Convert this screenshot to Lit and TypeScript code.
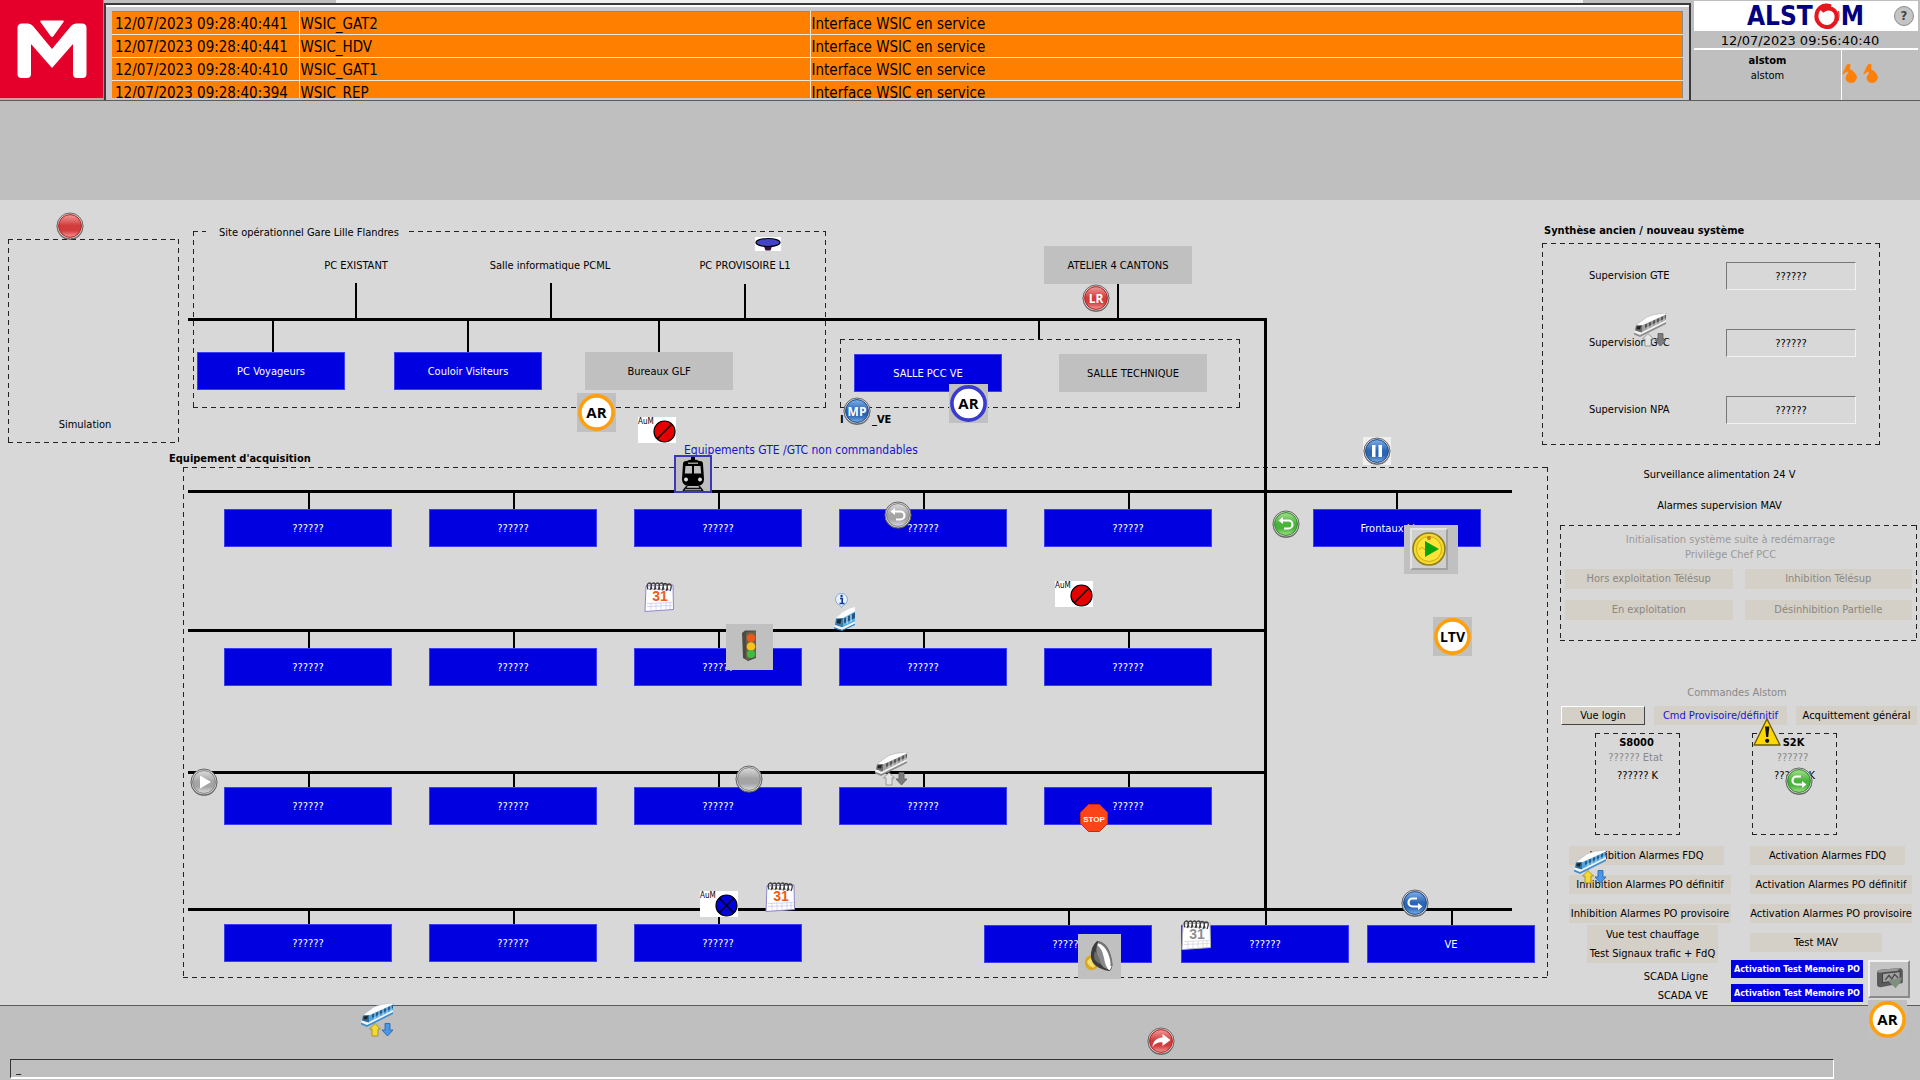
import { LitElement, html, svg, css, TemplateResult } from "lit";
import { customElement } from "lit/decorators.js";
import { styleMap } from "lit/directives/style-map.js";

type Drawing = TemplateResult;

interface Box { x: number; y: number; w: number; h: number; }
interface NodeItem extends Box { text: string; tone: "blue" | "grey"; }
interface Label { x: number; y: number; text: string; kind?: string; }
interface Pin { x: number; y: number; w: number; h: number; name: string; art: Drawing; }

const place = (b: Box) => styleMap({ left: `${b.x}px`, top: `${b.y}px`, width: `${b.w}px`, height: `${b.h}px` });

/* ---------- round glossy buttons ---------- */

const TONES: Record<string, [string, string, string]> = {
  red: ["#f29a9a", "#d23c3c", "#b81f1f"],
  blue: ["#7fb0e8", "#2a66b4", "#1a4788"],
  green: ["#a4e08c", "#48b53a", "#2d8a26"],
  grey: ["#dcdcdc", "#a4a4a4", "#808080"],
};

const ball = (tone: string, glyph: unknown = null): Drawing => {
  const [hi, mid, low] = TONES[tone];
  return html`<svg viewBox="0 0 28 28">
    <defs>
      <linearGradient id="ball-${tone}" x1="0" y1="0" x2="0" y2="1">
        <stop offset="0" stop-color=${hi}></stop>
        <stop offset=".48" stop-color=${mid}></stop>
        <stop offset=".7" stop-color=${mid}></stop>
        <stop offset="1" stop-color=${hi}></stop>
      </linearGradient>
    </defs>
    <circle cx="14" cy="14.600" r="13.200" fill="#3c3c3c" opacity=".8"></circle>
    <circle cx="14" cy="14" r="13" fill="#dedede" stroke="#666" stroke-width="1"></circle>
    <circle cx="14" cy="14" r="11.400" fill="url(#ball-${tone})" stroke=${low} stroke-width="1"></circle>
    ${glyph}
  </svg>`;
};

const back = svg`<path d="M9 10.500H16.500a4 4 0 0 1 0 8H12" fill="none" stroke="#fff" stroke-width="2.200"></path><path d="M6.500 10.500L11 7v7z" fill="#fff"></path>`;
const forward = svg`<g transform="rotate(180 14 14)">${back}</g>`;
const share = svg`<path d="M5.500 20C6 14 10 10.500 15.500 10.500V7L23.500 13L15.500 19V15.400C11 15 8 16.500 5.500 20z" fill="#fff"></path>`;
const play = svg`<path d="M10 7.500L21 14L10 20.500z" fill="#fff"></path>`;
const pause = svg`<path d="M9 8h3.500v12H9zM15.500 8H19v12h-3.500z" fill="#fff"></path>`;
const letters = (t: string) => svg`<text x="14" y="18.500" class="ball-text">${t}</text>`;

/* ---------- ringed letter signs ---------- */

const ringSign = (t: string, color: string, size = 15): Drawing => html`<svg viewBox="0 0 39 39">
  <circle cx="19.500" cy="19.500" r="16.600" fill="#fff" stroke=${color} stroke-width="3.600"></circle>
  <text x="19.500" y="25" class="sign-text" font-size=${size}>${t}</text>
</svg>`;

/* ---------- AuM tag ---------- */

const aum = (crossed: boolean): Drawing => html`<svg viewBox="0 0 38 26">
  <rect width="38" height="26" fill="#fff"></rect>
  <text x="0" y="7" class="aum-text">AuM</text>
  <circle cx="26.500" cy="14.500" r="10.500" fill=${crossed ? "#0000e0" : "#e60000"} stroke="#000" stroke-width="1.200"></circle>
  <path d=${crossed ? "M19.500 21.500L33.500 7.500M19.500 7.500L33.500 21.500" : "M19.500 21.500L33.500 7.500"} stroke="#000" stroke-width="1.500"></path>
</svg>`;

/* ---------- trains ---------- */

const trainBody = (c: boolean) => svg`
  <path d="M1 19L7 21.500L33 8.500V11L7 24L1 21.500z" fill=${c ? "#3f8fcf" : "#8d8d8d"}></path>
  <path d="M2 17L7 19.500L33 6V9L7 22L1 19.500z" fill="#f4f4f4"></path>
  <path d="M3 12L14 4Q20 1 33 0V2L11 12L8 13z" fill="#fdfdfd" stroke=${c ? "#9fb8cc" : "#a5a5a5"} stroke-width=".5"></path>
  <path d="M9 12.500L33 1.500V7L9 19z" fill=${c ? "#4fa5dd" : "#a0a0a0"}></path>
  <path d="M12 11.500L33 2V5L12 15z" fill=${c ? "#1c5f95" : "#555"}></path>
  <path d="M15 9.500v7M19 7.500v7M23 6v6.500M27 4v6.500M31 2.500v6" stroke=${c ? "#bfe2f7" : "#d5d5d5"} stroke-width="1"></path>
  <path d="M3 12.500L9 12L9 19.500L2 17.500z" fill=${c ? "#2e6f9e" : "#6b6b6b"}></path>
  <path d="M4 13.500L8 13L7 16.500L3.500 16z" fill="#222"></path>`;

const train = (c: boolean): Drawing => html`<svg viewBox="0 0 34 34">
  ${trainBody(c)}
  <path d="M15 20.500L20.500 26H18V33H12V26H9.500z" fill=${c ? "#f2d933" : "#e4e4e4"} stroke=${c ? "#9c8515" : "#888"} stroke-width=".8"></path>
  <path d="M25 20.500H30V27H33L27.500 33L22 27H25z" fill=${c ? "#4a97ea" : "#7c7c7c"} stroke=${c ? "#1d5fb0" : "#5c5c5c"} stroke-width=".8"></path>
</svg>`;

const infoTrain: Drawing = html`<svg viewBox="0 0 21 38">
  <path d="M7.500 14.500L5.500 12a6 6 0 1 1 4 0z" fill="#e6f1fb" stroke="#86a9cc" stroke-width="1"></path>
  <path d="M6 5.500h2.200v5M5.500 10.500h5" stroke="#123a9c" stroke-width="1.700" fill="none"></path>
  <circle cx="7.600" cy="3" r="1.200" fill="#123a9c"></circle>
  <path d="M2 25L9 19Q14 15.500 21 14V19L9 25.500z" fill="#fcfcfc"></path>
  <path d="M9 25L21 18.500V29L9 35z" fill="#5fb0e2"></path>
  <path d="M10 25.500L21 19.500V25L10 30.500z" fill="#1c5788"></path>
  <path d="M13 23.500v7M17 21.500v7" stroke="#d5ecfa" stroke-width="1.200"></path>
  <path d="M2 25.500L9 25V34.500L1 32z" fill="#3c7ba8"></path>
  <path d="M3 26.500L7.500 26L6.500 31L2.500 30z" fill="#1d2b36"></path>
  <path d="M1 32L8 34.500L21 28.500V30.500L8 37L0 34z" fill="#f5f5f5"></path>
  <path d="M0 34L8 37L21 30.500V32L8 38L0 35.500z" fill="#2f86c6"></path>
</svg>`;

const frontTrain: Drawing = html`<svg viewBox="0 0 38 38">
  <path d="M17 2h4v3h-4zM12 8Q12 4.500 19 4.500Q26 4.500 26 8z" fill="#000"></path>
  <path d="M9 9Q9 6 12 6H26Q29 6 29 9L30 24Q30 30 24 31H14Q8 30 8 24z" fill="#000"></path>
  <path d="M11.500 11H18V18.500H10.800zM20 11h6.500l.7 7.500H20z" fill="#bfbfbf"></path>
  <path d="M14 7.500h10v1.500H14z" fill="#999"></path>
  <circle cx="12" cy="24.500" r="2" fill="#ddd"></circle><circle cx="26" cy="24.500" r="2" fill="#ddd"></circle>
  <path d="M13 31L9 36M25 31L29 36M12 33.500H26M9 36H29" stroke="#111" stroke-width="1.600"></path>
  <rect x="1" y="1" width="36" height="36" fill="none" stroke="#3a3ab8" stroke-width="2"></rect>
</svg>`;

/* ---------- other symbols ---------- */

const calendar = (c: boolean): Drawing => html`<svg viewBox="0 0 30 31">
  <path d="M2 5L29 4L29.500 28.500L1 30.500z" fill="#fff" stroke=${c ? "#8c86cc" : "#b4b4b4"} stroke-width="1"></path>
  <path d="M3 22.500L28 21.500M3 25.500L28 24.500M7 22V30M12 22V29.500M17 22V29.500M22 21.500V29M26 21.500V28.500" stroke=${c ? "#c7c2f0" : "#d0d0d0"} stroke-width=".7"></path>
  <path d="M4 8.500Q2 3 5 2Q9 2 6 9M8 8.500Q6 3 9 2Q13 2 10 9M12 8.500Q10 3 13 2Q17 2 14 9M16 9Q14 3 17 2Q21 2 18 9.500M20 9Q18 3 21 2.500Q25 3 22 10M24 9.500Q22 3 25 3Q29 3 26 10" fill="none" stroke="#3a3a3a" stroke-width="1.300"></path>
  <text x="16" y="20" class="cal-text" fill=${c ? "#f25a18" : "#8f8f8f"}>31</text>
</svg>`;

const trafficLight: Drawing = html`<svg viewBox="0 0 47 46">
  <path d="M16 9L19 6.500H30V34L22 37L17 34z" fill="#4b4b45"></path>
  <path d="M20 8.500L30 7V33L20 36z" fill="#6b6248"></path>
  <circle cx="25" cy="14" r="4.300" fill="#e8591b"></circle>
  <circle cx="25" cy="22.500" r="4.300" fill="#f6c21c"></circle>
  <circle cx="25" cy="30" r="4" fill="#3fbb3f"></circle>
</svg>`;

const coin: Drawing = html`<svg viewBox="0 0 54 49">
  <rect x="6" y="3" width="38" height="42" fill="#cfcfcf"></rect>
  <path d="M44 3V45H6L8 43H42V3z" fill="#a2a2a2"></path>
  <path d="M6 45V3H44L42 5H8V43z" fill="#e4e4e4"></path>
  <circle cx="25" cy="24" r="16" fill="#f3d92c" stroke="#8f7d17" stroke-width="1.600"></circle>
  <circle cx="25" cy="24" r="12.500" fill="#ffe437" stroke="#c9ab1c" stroke-width="1"></circle>
  <circle cx="25" cy="13" r="2" fill="#c47d12"></circle>
  <path d="M15 25q3-5 6 0" fill="none" stroke="#cfae1c" stroke-width="1.200"></path>
  <path d="M21 16L35 24L21 32z" fill="#0ba50b"></path>
</svg>`;

const stopSign: Drawing = html`<svg viewBox="0 0 28 28">
  <path d="M8.500 .5H19.500L27.500 8.500V19.500L19.500 27.500H8.500L.5 19.500V8.500z" fill="#fb4417" stroke="#c92a07" stroke-width="1"></path>
  <text x="14" y="17.500" class="stop-text">STOP</text>
</svg>`;

const speaker: Drawing = html`<svg viewBox="0 0 43 45">
  <path d="M7 27Q8 22 13 21L20 33Q15 38 10 35Q6 32 7 27z" fill="#d9a91c"></path>
  <path d="M9 28Q11 24 14 24L17 33Q12 35 9 28z" fill="#f7dd6a"></path>
  <path d="M19 7Q12 13 13 24Q15 34 31 37Q35 36 34 28Q31 8 19 7z" fill="#3c3c3c"></path>
  <path d="M20 9Q27 10 31 19Q36 32 32 36Q28 36 25.500 28Q24 17 19 12z" fill="#fff"></path>
  <path d="M19 11Q24 14 26 24Q27 31 30 35Q24 34 21 27Q17 19 19 11z" fill="#8a8a8a"></path>
  <path d="M17 17Q15 22 17 26Q19 29 23 30Q21 22 17 17z" fill="#6a6a6a"></path>
  <path d="M20 8Q27 10 31 19Q34 27 33.500 32" fill="none" stroke="#777" stroke-width="2"></path>
</svg>`;

const warning: Drawing = html`<svg viewBox="0 0 28 30">
  <path d="M14 2L27 28H1z" fill="#ffd800" stroke="#6e5c00" stroke-width="1.400" stroke-linejoin="round"></path>
  <path d="M12 9.500h4.400L15.200 20h-2z" fill="#111"></path>
  <circle cx="14.200" cy="23.800" r="2.100" fill="#111"></circle>
</svg>`;

const hat: Drawing = html`<svg viewBox="0 0 26 14">
  <rect width="26" height="14" fill="#fff"></rect>
  <path d="M9 8h8v1.500l-1.500 4h-5L9 9.500z" fill="#35103a"></path>
  <ellipse cx="13" cy="5.500" rx="12" ry="4" fill="#4343c8" stroke="#000" stroke-width="1.200"></ellipse>
</svg>`;

const printer: Drawing = html`<svg viewBox="0 0 30 26">
  <path d="M2 7Q2 3 6 3L26 1Q30 1 30 5V16Q30 18 27 18L6 22Q2 22 2 19z" fill="#5a5a5a"></path>
  <path d="M3 6Q3 3 6 3L27 1L24 4L7 6z" fill="#9a9a9a"></path>
  <path d="M8 7L27 5V14L8 17z" fill="#a2a2a2" stroke="#3c3c3c" stroke-width="1"></path>
  <path d="M11 14L15 9L18 13L21 8L25 12" fill="none" stroke="#4b4b4b" stroke-width="1.500"></path>
  <path d="M14 15L29 11L27 17L22 23L19 20z" fill="#7f8f7f"></path>
</svg>`;

const flame: Drawing = html`<svg class="flame" viewBox="0 0 15 20">
  <path d="M0 11.500L4 3Q6 -.5 8.500 1.500L8 6Q14 9 15 14.500Q13.500 20 9 20Q4 19.500 3.500 15Q4 12 6 10L5 8.500L1.500 11z" fill="#ff8008"></path>
</svg>`;

/* ---------- data ---------- */

const EVENTS = [
  ["12/07/2023 09:28:40:441", "WSIC_GAT2", "Interface WSIC en service"],
  ["12/07/2023 09:28:40:441", "WSIC_HDV", "Interface WSIC en service"],
  ["12/07/2023 09:28:40:410", "WSIC_GAT1", "Interface WSIC en service"],
  ["12/07/2023 09:28:40:394", "WSIC_REP", "Interface WSIC en service"],
];

const UNKNOWN = "??????";
const COLUMNS = [224, 429, 634, 839, 1044];
const node = (x: number, y: number, text = UNKNOWN, w = 168, tone: "blue" | "grey" = "blue"): NodeItem => ({ x, y, w, h: 38, text, tone });

const NODES: NodeItem[] = [
  node(197, 152, "PC Voyageurs", 148),
  node(394, 152, "Couloir Visiteurs", 148),
  node(585, 152, "Bureaux GLF", 148, "grey"),
  node(1044, 46, "ATELIER 4 CANTONS", 148, "grey"),
  node(854, 154, "SALLE PCC VE", 148),
  node(1059, 154, "SALLE TECHNIQUE", 148, "grey"),
  ...COLUMNS.map((x) => node(x, 309)),
  node(1313, 309, "Frontaux Ligne"),
  ...COLUMNS.map((x) => node(x, 448)),
  ...COLUMNS.map((x) => node(x, 587)),
  ...COLUMNS.slice(0, 3).map((x) => node(x, 724)),
  node(984, 725),
  node(1181, 725),
  node(1367, 725, "VE"),
];

const ZONES: Box[] = [
  { x: 8, y: 39, w: 171, h: 204 },
  { x: 193, y: 31, w: 633, h: 177 },
  { x: 840, y: 139, w: 400, h: 69 },
  { x: 183, y: 267, w: 1365, h: 511 },
];

const LABELS: Label[] = [
  { x: 85, y: 225, text: "Simulation", kind: "centre" },
  { x: 206, y: 33, text: "Site opérationnel Gare Lille Flandres", kind: "legend" },
  { x: 356, y: 66, text: "PC EXISTANT", kind: "centre" },
  { x: 550, y: 66, text: "Salle informatique PCML", kind: "centre" },
  { x: 745, y: 66, text: "PC PROVISOIRE L1", kind: "centre" },
  { x: 840, y: 220, text: "I", kind: "strong" },
  { x: 872, y: 220, text: "_VE", kind: "strong" },
  { x: 169, y: 259, text: "Equipement d'acquisition", kind: "strong" },
  { x: 684, y: 250, text: "Equipements GTE /GTC non commandables", kind: "note" },
];

const TRUNKS = "M188 119.500H1267M1265.500 118V710M188 291.500H1512M188 430.500H1266M188 572.500H1266M188 709.500H1512";
const STUBS = [
  "M356 83V119M551 83V119M745 84V119M1118 84V119",
  "M273 119V152M468 119V152M659 119V152M1039 119V139",
  ...[292, 431, 573].map((y, i) => [309, 514, 719, 924, 1129].map((x) => `M${x} ${y}V${[309, 448, 587][i]}`).join("")),
  "M1397 292V309M309 710V724M514 710V724M719 710V724M1069 710V725M1266 710V725M1452 710V725",
].join("");

const round = (cx: number, cy: number, name: string, art: Drawing): Pin => ({ x: cx - 14, y: cy - 14, w: 28, h: 28, name, art });

const PINS: Pin[] = [
  round(70, 226, "Voyant", ball("red")),
  { x: 755, y: 237, w: 26, h: 14, name: "Casquette", art: hat },
  round(1096, 298, "LR", ball("red", letters("LR"))),
  round(857, 411, "MP", ball("blue", letters("MP"))),
  { x: 577, y: 393, w: 39, h: 39, name: "plate", art: ringSign("AR", "#ff9f0a") },
  { x: 949, y: 384, w: 39, h: 39, name: "plate", art: ringSign("AR", "#3a3ad0") },
  { x: 638, y: 417, w: 38, h: 26, name: "AuM", art: aum(false) },
  { x: 674, y: 455, w: 38, h: 38, name: "plate", art: frontTrain },
  round(898, 515, "Retour", ball("grey", back)),
  round(1286, 524, "Retour", ball("green", back)),
  { x: 1363, y: 437, w: 28, h: 28, name: "white", art: ball("blue", pause) },
  { x: 1404, y: 525, w: 54, h: 49, name: "plate", art: coin },
  { x: 644, y: 581, w: 30, h: 31, name: "Calendrier", art: calendar(true) },
  { x: 726, y: 624, w: 47, h: 46, name: "plate", art: trafficLight },
  { x: 834, y: 593, w: 21, h: 38, name: "Info train", art: infoTrain },
  { x: 1055, y: 581, w: 38, h: 26, name: "AuM", art: aum(false) },
  { x: 1433, y: 617, w: 39, h: 39, name: "plate", art: ringSign("LTV", "#ff9f0a", 14) },
  round(204, 782, "Lecture", ball("grey", play)),
  round(749, 779, "Voyant", ball("grey")),
  { x: 874, y: 752, w: 34, h: 34, name: "Train", art: train(false) },
  round(1094, 818, "Stop", stopSign),
  { x: 700, y: 891, w: 38, h: 26, name: "AuM", art: aum(true) },
  { x: 765, y: 881, w: 30, h: 31, name: "Calendrier", art: calendar(true) },
  { x: 1181, y: 919, w: 30, h: 31, name: "Calendrier", art: calendar(false) },
  { x: 1078, y: 934, w: 43, h: 45, name: "plate", art: speaker },
  round(1415, 903, "Suivant", ball("blue", forward)),
  { x: 360, y: 1003, w: 34, h: 34, name: "Train", art: train(true) },
  round(1161, 1041, "Partager", ball("red", share)),
];

/* Pins of the command column, measured from that column's left edge. */
const SIDE_PINS: Pin[] = [
  { x: 93, y: 313, w: 34, h: 34, name: "Train", art: train(false) },
  { x: 213, y: 717, w: 28, h: 30, name: "Alerte", art: warning },
  round(259, 781, "Suivant", ball("green", forward)),
  { x: 33, y: 850, w: 34, h: 34, name: "Train", art: train(true) },
  { x: 328, y: 1000, w: 39, h: 39, name: "plate", art: ringSign("AR", "#ff9f0a") },
];

@customElement("app-root")
export class AppRoot extends LitElement {
  static styles = css`
    :host {
      display: block;
      position: relative;
      min-height: 100vh;
      overflow-x: hidden;
      background: #d8d8d8;
      color: #000;
      font: 11px/16px "DejaVu Sans Condensed", "DejaVu Sans", sans-serif;
      --dash: #222;
    }
    * { box-sizing: border-box; }
    svg { display: block; width: 100%; height: 100%; }
    button { font: inherit; color: inherit; border: 0; padding: 0; margin: 0; white-space: nowrap; cursor: pointer; }
    h2, p { margin: 0; font-size: inherit; }
    .page { display: flex; flex-direction: column; min-height: 100vh; }

    .top { display: grid; grid-template-columns: 104px 1fr 229px; height: 101px; background: #bfbfbf; border-bottom: 1px solid #5c5c5c; }
    .brand { background: #e5002b; border-bottom: 2px solid #d99aa4; border-right: 1px solid #b9828a; }
    .events { display: flex; flex-direction: column; min-width: 0; overflow: hidden; }
    .strip { flex: none; height: 3px; margin: 0 108px 0 232px; background: #f0f0f0; }
    .frame { flex: 1; min-height: 0; overflow: hidden; border: 2px solid #3a3a3a; border-bottom: 0; padding: 2px 6px; background: linear-gradient(#fff, #fff) top / 100% 2px no-repeat, #c9c9cd; }
    .well { height: 100%; overflow: hidden; padding-top: 4px; }
    .log { width: 100%; border-collapse: collapse; table-layout: fixed; background: #ff8000; border-top: 1px solid #8a8a8a; font-size: 15px; line-height: 20px; }
    .log td { height: 23px; padding: 1px 3px 0; border-bottom: 1px solid #efe6da; border-right: 1px solid #efe6da; overflow: hidden; white-space: nowrap; }
    .log td:last-child { border-right-color: #8a8a8a; padding-left: 1px; }
    .log .when { width: 187px; }
    .log .tag { width: 511px; padding-left: 1px; }

    .identity { display: flex; flex-direction: column; padding: 1px 2px 0 3px; }
    .maker { display: flex; align-items: center; justify-content: space-between; height: 30px; background: #fff; padding: 0 4px 0 53px; }
    .alstom { display: flex; align-items: center; gap: 1px; color: #000080; font-size: 26px; line-height: 30px; font-weight: 700; }
    .swirl { width: 26px; height: 26px; }
    .help { width: 20px; height: 20px; border-radius: 50%; background: #c4c4c4; border: 1px solid #8c8c8c; font-weight: 700; font-size: 13px; color: #444; }
    .clock { height: 19px; font: 13px/19px "DejaVu Sans", sans-serif; text-align: center; padding-right: 12px; border-bottom: 2px solid #fff; }
    .who { flex: 1; display: grid; grid-template-columns: 148px 1fr; }
    .user { text-align: center; border-right: 1px solid #fff; line-height: 15px; padding-top: 3px; }
    .flames { display: flex; gap: 6px; padding: 13px 0 0 0; }
    .flame { width: 15px; height: 20px; }

    .band { height: 99px; background: #bfbfbf; }

    .main { flex: 1; display: flex; min-height: 805px; }
    .diagram { position: relative; flex: 1; min-width: 0; }
    .wires { position: absolute; left: 0; top: 0; width: 1540px; height: 800px; }
    .dashed {
      background:
        repeating-linear-gradient(90deg, var(--dash) 0 5px, transparent 5px 9px) top / 100% 1px no-repeat,
        repeating-linear-gradient(90deg, var(--dash) 0 5px, transparent 5px 9px) bottom / 100% 1px no-repeat,
        repeating-linear-gradient(180deg, var(--dash) 0 5px, transparent 5px 9px) left / 1px 100% no-repeat,
        repeating-linear-gradient(180deg, var(--dash) 0 5px, transparent 5px 9px) right / 1px 100% no-repeat;
    }
    .zone, .node, .label, .pin { position: absolute; }
    .node { text-align: center; padding-top: 2px; }
    .node.blue { background: #0000e0; color: #fff; border: 1px solid #3c3cf0; }
    .node.grey { background: #c0c0c0; }
    .label { white-space: nowrap; transform: translateY(-50%); }
    .label.centre { transform: translate(-50%, -50%); }
    .label.legend { padding: 0 10px 0 13px; background: #d8d8d8; }
    .label.strong { font-weight: 700; }
    .label.note { color: #1414c8; font-size: 12px; }

    .side { flex: none; width: 380px; padding: 22px 3px 0 2px; }
    .side h2 { padding-left: 2px; line-height: 18px; font-weight: 700; }
    .synth { display: grid; grid-template-columns: 137px 130px; grid-auto-rows: 28px; row-gap: 39px; align-items: center; width: 338px; margin-top: 3px; padding: 19px 0 21px 47px; }
    .synth input { width: 130px; height: 28px; margin: 0; padding: 0; border: 1px solid; border-color: #777 #f2f2f2 #f2f2f2 #777; background: transparent; font: inherit; color: inherit; text-align: center; }
    .notes { display: grid; gap: 15px; padding: 22px 20px 11px 0; text-align: center; }
    .init { margin-left: 18px; height: 116px; padding: 7px 5px; }
    .init p { padding-right: 16px; text-align: center; line-height: 15px; color: #999; }
    .pairs { display: grid; grid-template-columns: 1fr 1fr; gap: 11px 12px; padding-top: 7px; }
    .flat { height: 19px; background: #d4cfc7; }
    .pairs .flat { height: 20px; color: #8a8782; }
    .cmd-title { padding: 44px 0 5px 15px; text-align: center; color: #888; }
    .cmds { display: flex; gap: 9px; padding-left: 19px; height: 19px; }
    .raised { width: 84px; background: #d4cfc7; border: 1px solid; border-color: #fff #444 #444 #fff; }
    .cmds .mode { width: 133px; color: #1414d8; }
    .cmds .ack { flex: 1; }
    .racks { display: flex; gap: 72px; padding: 8px 0 11px 53px; }
    .rack { width: 85px; height: 102px; padding-top: 2px; text-align: center; line-height: 15px; }
    .rack b { padding-right: 2px; }
    .rack .state { color: #888; padding-right: 4px; }
    .rack .temp { padding-top: 3px; }
    .lower { display: grid; grid-template-columns: 162px 1fr; padding-left: 27px; }
    .column { display: flex; flex-direction: column; align-items: flex-start; gap: 10px; }
    .column .flat { width: 162px; }
    .column .short { width: 155px; }
    .right { padding-left: 19px; }
    .right .mav { width: 132px; }
    .tests { margin: -8px 0 0 18px; background: #d4cfc7; }
    .tests button { display: block; width: 131px; height: 19px; background: none; }
    .scada { align-self: stretch; padding-right: 23px; text-align: right; line-height: 19px; margin-top: -6px; }
    .memory { display: grid; grid-template-columns: 132px 42px; grid-template-rows: 18px 18px; gap: 6px 5px; margin: -2px 0 0 -19px; }
    .memory .act { background: #0000e0; color: #fff; font-weight: 700; font-size: 9px; }
    .print { grid-area: 1 / 2 / 3 / 3; height: 38px; padding: 5px; background: #c4c4c4; border: 2px solid; border-color: #f0f0f0 #8a8a8a #8a8a8a #f0f0f0; }

    .bottom { flex: none; height: 75px; padding: 53px 86px 0 10px; background: #bfbfbf; border-top: 1px solid #5c5c5c; }
    .entry { display: block; width: 100%; height: 20px; padding: 0 5px; border: 1px solid; border-color: #333 #fff #fff #333; border-bottom-width: 2px; background: transparent; font: inherit; }

    .layer { position: absolute; top: 0; left: 0; width: 0; height: 0; }
    .layer.end { left: auto; right: 0; width: 380px; }
    .pin.plate { background: #c0c0c0; }
    .pin.white { background: #f0eeee; }
    .pin text { font-family: "Open Sans", "Noto Sans", sans-serif; font-weight: 700; }
    .ball-text { font-size: 12px; fill: #fff; text-anchor: middle; }
    .sign-text { fill: #000; text-anchor: middle; }
    .pin .aum-text { font-family: "DejaVu Sans Condensed", sans-serif; font-size: 8px; font-weight: 400; }
    .pin .cal-text { font-family: "Liberation Sans", sans-serif; font-size: 14px; text-anchor: middle; }
    .pin .stop-text { font-family: "Liberation Sans", sans-serif; font-size: 8px; fill: #fff; text-anchor: middle; }
  `;

  private header() {
    return html`<header class="top">
      <div class="brand"><svg viewBox="0 0 103 98" role="img" aria-label="M">
        <path d="M17.500 28Q17.500 23.500 22 23.500H28Q31 23.500 33 26L52 49L71 26Q73 23.500 76 23.500H82Q86.500 23.500 86.500 28V74Q86.500 78 82.500 78H77Q73 78 73 74V44L52 68L31 44V74Q31 78 27 78H21.500Q17.500 78 17.500 74z" fill="#fff"></path>
        <path d="M33 19L52 42L71 19L64.500 19L52 37z" fill="#e5002b"></path>
        <path d="M41 20.500Q39.500 20.500 40.500 22L50.500 36Q52 38 53.500 36L63.500 22Q64.500 20.500 63 20.500z" fill="#fff"></path>
      </svg></div>
      <div class="events">
        <div class="strip"></div>
        <div class="frame"><div class="well"><table class="log"><tbody>
          ${EVENTS.map(([when, tag, text]) => html`<tr><td class="when">${when}</td><td class="tag">${tag}</td><td>${text}</td></tr>`)}
        </tbody></table></div></div>
      </div>
      <div class="identity">
        <div class="maker">
          <span class="alstom"><span>ALST</span><svg class="swirl" viewBox="0 0 26 26">
            <path d="M17 3.500Q8 0 3.500 8Q0 17 7.500 22.500Q16 27 21.500 19Q25 10 18 6Q12 4 8 8.500" fill="none" stroke="#e8161e" stroke-width="4"></path>
            <path d="M8 2Q12 .5 17 2M24.500 8Q26 13 24 18" fill="none" stroke="#e8161e" stroke-width="1"></path>
          </svg><span>M</span></span>
          <button class="help">?</button>
        </div>
        <div class="clock">12/07/2023 09:56:40:40</div>
        <div class="who">
          <div class="user"><b>alstom</b><br>alstom</div>
          <div class="flames">${flame}${flame}</div>
        </div>
      </div>
    </header>`;
  }

  private diagram() {
    return html`<section class="diagram">
      ${ZONES.map((z) => html`<div class="zone dashed" style=${place(z)}></div>`)}
      <svg class="wires" viewBox="0 0 1540 800">
        <path d=${TRUNKS} fill="none" stroke="#000" stroke-width="3"></path>
        <path d=${STUBS} fill="none" stroke="#000" stroke-width="2"></path>
      </svg>
      ${NODES.map((n) => html`<button class="node ${n.tone}" style=${place(n)}>${n.text}</button>`)}
      ${LABELS.map((l) => html`<span class="label ${l.kind}" style=${styleMap({ left: `${l.x}px`, top: `${l.y}px` })}>${l.text}</span>`)}
    </section>`;
  }

  private side() {
    return html`<aside class="side">
      <h2>Synthèse ancien / nouveau système</h2>
      <div class="synth dashed">
        ${["GTE", "GTC", "NPA"].map((s) => html`<label for="s-${s}">Supervision ${s}</label><input id="s-${s}" readonly .value=${UNKNOWN}>`)}
      </div>
      <div class="notes"><span>Surveillance alimentation 24 V</span><span>Alarmes supervision MAV</span></div>
      <div class="init dashed">
        <p>Initialisation système suite à redémarrage</p>
        <p>Privilège Chef PCC</p>
        <div class="pairs">
          ${["Hors exploitation Télésup", "Inhibition Télésup", "En exploitation", "Désinhibition Partielle"].map((t) => html`<button class="flat">${t}</button>`)}
        </div>
      </div>
      <p class="cmd-title">Commandes Alstom</p>
      <div class="cmds">
        <button class="raised">Vue login</button>
        <button class="flat mode">Cmd Provisoire/définitif</button>
        <button class="flat ack">Acquittement général</button>
      </div>
      <div class="racks">
        <div class="rack dashed"><b>S8000</b><div class="state">?????? Etat</div><div class="temp">?????? K</div></div>
        <div class="rack dashed"><b>S2K</b><div class="state">??????</div><div class="temp">?????? K</div></div>
      </div>
      <div class="lower">
        <div class="column">
          <button class="flat short">Inhibition Alarmes FDQ</button>
          <button class="flat">Inhibition Alarmes PO définitif</button>
          <button class="flat">Inhibition Alarmes PO provisoire</button>
          <div class="tests"><button>Vue test chauffage</button><button>Test Signaux trafic + FdQ</button></div>
          <div class="scada">SCADA Ligne<br>SCADA VE</div>
        </div>
        <div class="column right">
          <button class="flat short">Activation Alarmes FDQ</button>
          <button class="flat">Activation Alarmes PO définitif</button>
          <button class="flat">Activation Alarmes PO provisoire</button>
          <button class="flat mav">Test MAV</button>
          <div class="memory">
            <button class="act">Activation Test Memoire PO</button>
            <button class="act">Activation Test Memoire PO</button>
            <button class="print" aria-label="Imprimer">${printer}</button>
          </div>
        </div>
      </div>
    </aside>`;
  }

  private pins(list: Pin[], end = false) {
    return html`<div class="layer ${end ? "end" : ""}">
      ${list.map((p) => html`<div class="pin ${p.name === "plate" || p.name === "white" ? p.name : ""}" style=${place(p)}>${p.art}</div>`)}
    </div>`;
  }

  render() {
    return html`<div class="page">
      ${this.header()}
      <div class="band"></div>
      <main class="main">${this.diagram()}${this.side()}</main>
      <footer class="bottom"><input class="entry" aria-label="Message" .value=${"_"}></footer>
    </div>
    ${this.pins(PINS)}${this.pins(SIDE_PINS, true)}`;
  }
}
